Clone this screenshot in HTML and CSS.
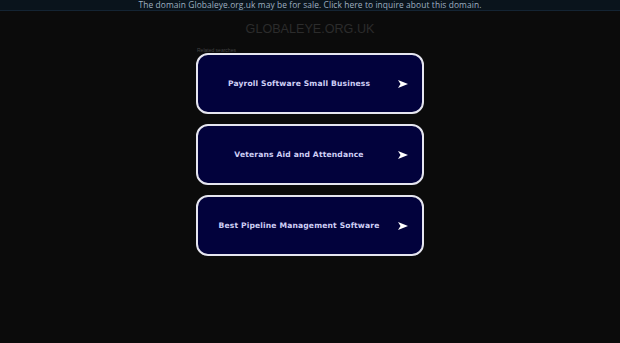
FILE: index.html
```html
<!DOCTYPE html>
<html>
<head>
<meta charset="utf-8">
<link rel="stylesheet" href="styles.css">
</head>
<body>
<div class="topbar">The domain Globaleye.org.uk may be for sale. Click here to inquire about this domain.</div>
<h1 class="title">GLOBALEYE.ORG.UK</h1>
<div class="wrap">
  <div class="label">Related searches</div>
  <div class="list">
    <a class="btn" href="#"><span class="txt">Payroll Software Small Business</span><svg class="arrow" viewBox="0 0 10 8" width="10" height="8"><path d="M0 0 L10 4 L0 8 L2.5 4 Z" fill="#fff"/></svg></a>
    <a class="btn" href="#"><span class="txt">Veterans Aid and Attendance</span><svg class="arrow" viewBox="0 0 10 8" width="10" height="8"><path d="M0 0 L10 4 L0 8 L2.5 4 Z" fill="#fff"/></svg></a>
    <a class="btn" href="#"><span class="txt">Best Pipeline Management Software</span><svg class="arrow" viewBox="0 0 10 8" width="10" height="8"><path d="M0 0 L10 4 L0 8 L2.5 4 Z" fill="#fff"/></svg></a>
  </div>
</div>
</body>
</html>
```
FILE: styles.css
```css
html, body { margin: 0; padding: 0; }
body { background: #0b0b0b; font-family: "Liberation Sans", Arial, sans-serif; height: 343px; overflow: hidden; }
.topbar {
  height: 10px; line-height: 10px; text-align: center;
  background: #0a141c; border-bottom: 1px solid #142433;
  color: #9fb0c0; font-family: "Open Sans", sans-serif; font-size: 8.4px; letter-spacing: 0.1px;
}
.title { margin: 10px 0 0; text-align: center; font-weight: normal; font-size: 12.6px; line-height: 16px; color: #2c2c2c; }
.wrap { width: 228px; margin: 0 auto; padding-top: 10px; }
.label { font-size: 5px; line-height: 6px; color: #444; padding-left: 1px; height: 6px; }
.list { display: flex; flex-direction: column; gap: 10px; margin-top: 0; }
.btn {
  display: flex; align-items: center; justify-content: center; position: relative;
  height: 57px; border: 2px solid #e6e6f0; border-radius: 12px; background: #02023c;
  text-decoration: none; padding-right: 22px;
}
.txt { color: #cfcff5; font-family: "DejaVu Sans", sans-serif; font-weight: bold; font-size: 7.6px; letter-spacing: 0.15px; }
.arrow { position: absolute; right: 14px; top: 50%; margin-top: -4px; }
```
